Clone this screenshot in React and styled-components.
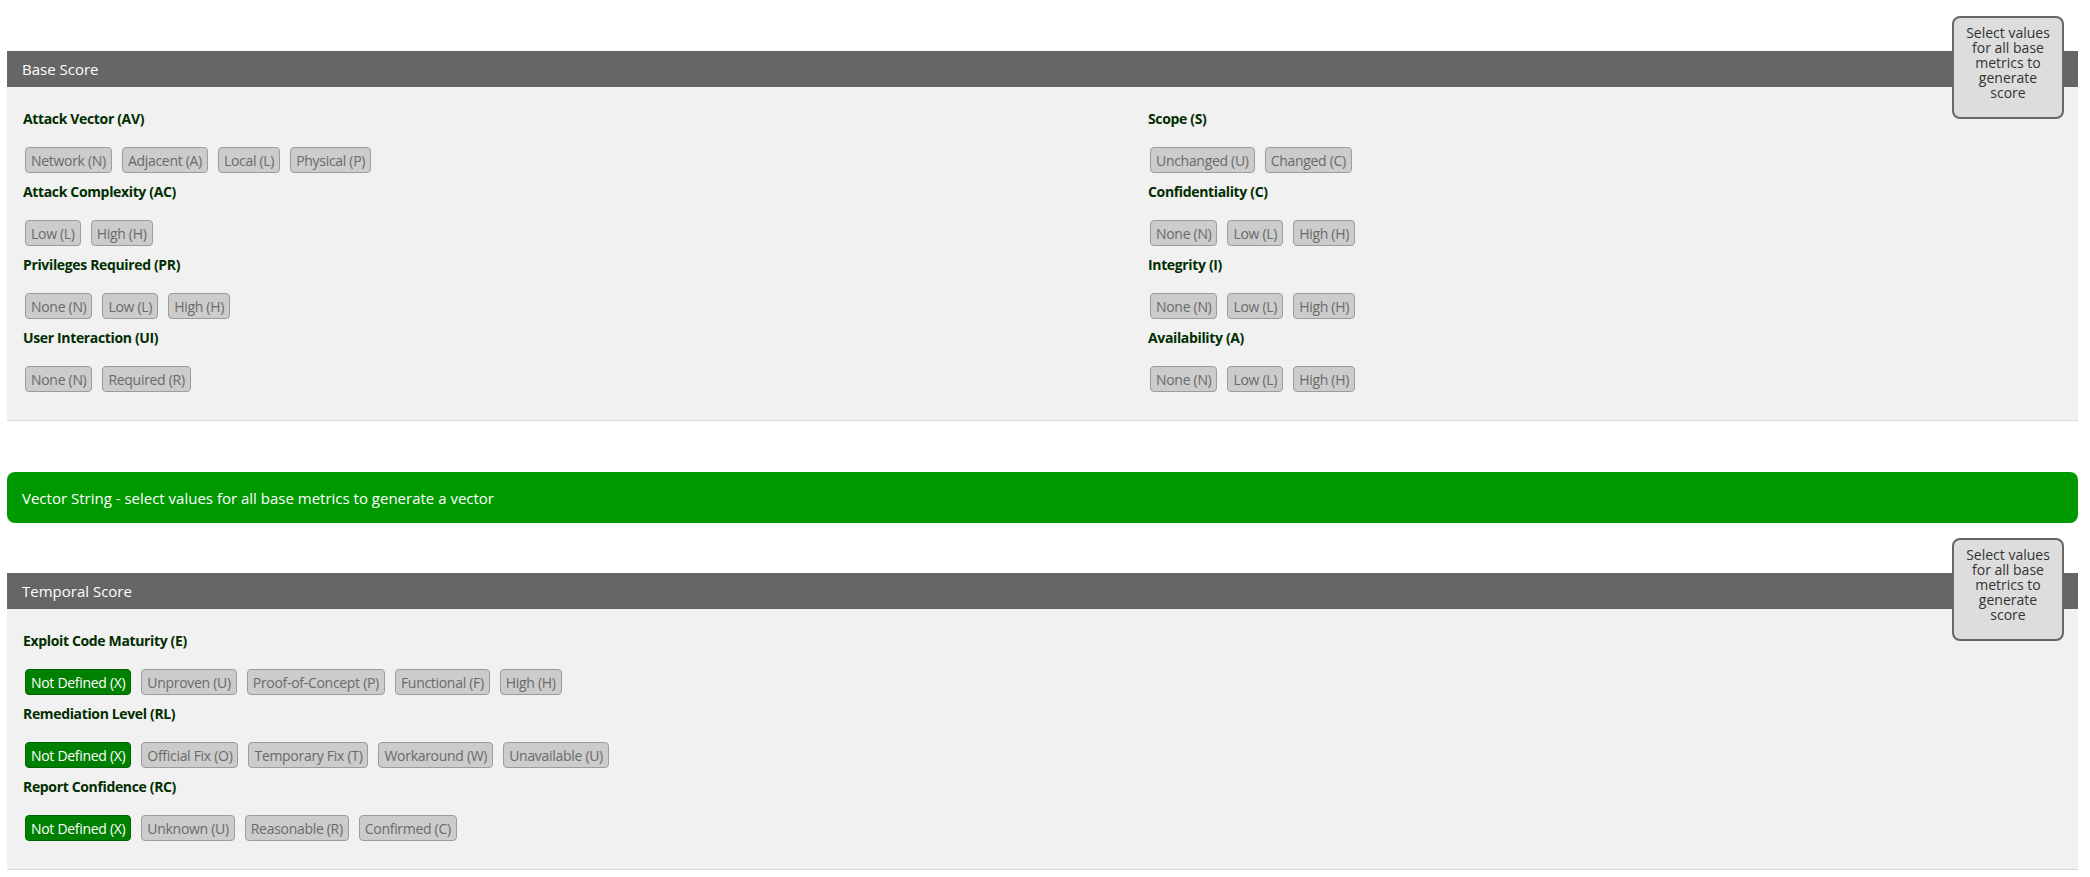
import React from "react";
import styled, { createGlobalStyle } from "styled-components";

const GlobalStyle = createGlobalStyle`
  body {
    margin: 0;
    background: #ffffff;
    font-family: "Open Sans", "Noto Sans", sans-serif;
  }
`;

const Page = styled.div`
  padding: 51px 12px 9px 7px;
`;

const Section = styled.section`
  position: relative;
  border-bottom: 1px solid #dadada;
`;

const SectionHeader = styled.div`
  height: 36px;
  display: flex;
  align-items: center;
  padding-left: 15px;
  background-color: #666666;
  color: #ffffff;
  font-size: 15px;
`;

const ScoreBadge = styled.div`
  position: absolute;
  top: -35px;
  right: 14px;
  box-sizing: border-box;
  width: 112px;
  height: 103px;
  padding: 7px 6px 0;
  border: 2px solid #666666;
  border-radius: 8px;
  background-color: #dddddd;
  color: #333333;
  font-size: 14px;
  line-height: 15px;
  text-align: center;
`;

const SectionBody = styled.div`
  display: grid;
  grid-template-columns: ${(props) => (props.split ? "1125px 1fr" : "1fr")};
  padding: 22px 16px 19px;
  background-color: #f1f1f1;
`;

const Column = styled.div``;

const Metric = styled.div`
  margin-bottom: 9px;
`;

const MetricLabel = styled.h3`
  margin: 0;
  font-size: 14px;
  letter-spacing: -0.35px;
  line-height: 20px;
  font-weight: 700;
  color: #002e00;
`;

const OptionRow = styled.div`
  display: flex;
  gap: 10px;
  margin-top: 18px;
  padding-left: 2px;
`;

const Option = styled.button`
  height: 26px;
  padding: 0 5px;
  border: 1px solid ${(props) => (props.active ? "#006400" : "#9c9c9c")};
  border-radius: 4px;
  background-color: ${(props) => (props.active ? "#008000" : "#cccccc")};
  color: ${(props) => (props.active ? "#ffffff" : "#6a6a6a")};
  font-family: inherit;
  font-size: 14px;
  letter-spacing: -0.3px;
  cursor: pointer;
`;

const VectorBar = styled.div`
  height: 51px;
  display: flex;
  align-items: center;
  margin: 51px 0 50px;
  padding-left: 15px;
  border-radius: 8px;
  background-color: #009900;
  color: #ffffff;
  font-size: 15px;
`;

const baseLeft = [
  {
    label: "Attack Vector (AV)",
    options: ["Network (N)", "Adjacent (A)", "Local (L)", "Physical (P)"],
  },
  { label: "Attack Complexity (AC)", options: ["Low (L)", "High (H)"] },
  {
    label: "Privileges Required (PR)",
    options: ["None (N)", "Low (L)", "High (H)"],
  },
  { label: "User Interaction (UI)", options: ["None (N)", "Required (R)"] },
];

const baseRight = [
  { label: "Scope (S)", options: ["Unchanged (U)", "Changed (C)"] },
  {
    label: "Confidentiality (C)",
    options: ["None (N)", "Low (L)", "High (H)"],
  },
  { label: "Integrity (I)", options: ["None (N)", "Low (L)", "High (H)"] },
  { label: "Availability (A)", options: ["None (N)", "Low (L)", "High (H)"] },
];

const temporal = [
  {
    label: "Exploit Code Maturity (E)",
    options: [
      "Not Defined (X)",
      "Unproven (U)",
      "Proof-of-Concept (P)",
      "Functional (F)",
      "High (H)",
    ],
    selected: 0,
  },
  {
    label: "Remediation Level (RL)",
    options: [
      "Not Defined (X)",
      "Official Fix (O)",
      "Temporary Fix (T)",
      "Workaround (W)",
      "Unavailable (U)",
    ],
    selected: 0,
  },
  {
    label: "Report Confidence (RC)",
    options: [
      "Not Defined (X)",
      "Unknown (U)",
      "Reasonable (R)",
      "Confirmed (C)",
    ],
    selected: 0,
  },
];

const MetricGroup = ({ label, options, selected }) => (
  <Metric>
    <MetricLabel>{label}</MetricLabel>
    <OptionRow>
      {options.map((opt, idx) => (
        <Option key={opt} active={idx === selected}>
          {opt}
        </Option>
      ))}
    </OptionRow>
  </Metric>
);

const App = () => {
  return (
    <Page>
      <GlobalStyle />
      <Section>
        <SectionHeader>Base Score</SectionHeader>
        <ScoreBadge>Select values for all base metrics to generate score</ScoreBadge>
        <SectionBody split>
          <Column>
            {baseLeft.map((m) => (
              <MetricGroup key={m.label} {...m} />
            ))}
          </Column>
          <Column>
            {baseRight.map((m) => (
              <MetricGroup key={m.label} {...m} />
            ))}
          </Column>
        </SectionBody>
      </Section>

      <VectorBar>
        Vector String - select values for all base metrics to generate a vector
      </VectorBar>

      <Section>
        <SectionHeader>Temporal Score</SectionHeader>
        <ScoreBadge>Select values for all base metrics to generate score</ScoreBadge>
        <SectionBody>
          <Column>
            {temporal.map((m) => (
              <MetricGroup key={m.label} {...m} />
            ))}
          </Column>
        </SectionBody>
      </Section>
    </Page>
  );
};

export default App;
